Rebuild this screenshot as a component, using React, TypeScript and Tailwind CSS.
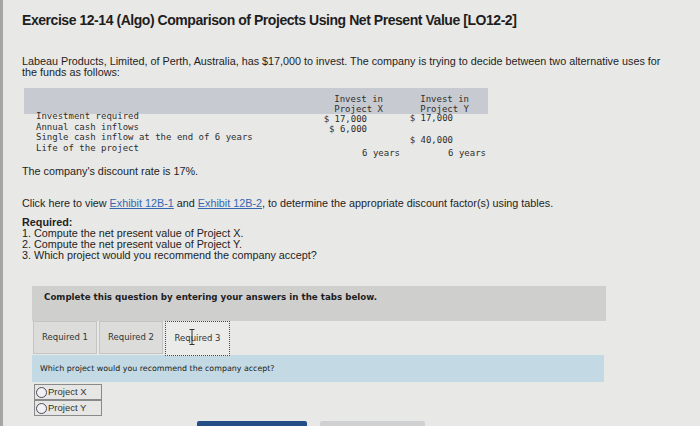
const sans = { fontFamily: '"Liberation Sans", Arial, sans-serif' };

function Tab({ label, active }: { label: string; active?: boolean }) {
  return (
    <div
      className={
        active
          ? "relative flex h-[35px] w-[65px] items-center justify-center border border-dotted border-[#4a4a4a] bg-[#ebebea] text-[8.5px] text-[#333]"
          : "flex h-[33px] w-[64px] items-center justify-center border border-[#c4c4c4] bg-[#dcdcdb] text-[8.5px] text-[#333]"
      }
    >
      {label}
      {active && (
        <svg className="absolute left-[23px] top-[7px]" width="6" height="16" viewBox="0 0 6 16" fill="none" stroke="#333" strokeWidth="1">
          <path d="M0.5 0.5h5M3 0.5v15M0.5 15.5h5" />
        </svg>
      )}
    </div>
  );
}

function Radio({ label }: { label: string }) {
  return (
    <div className="flex h-[16px] items-center gap-[1px] border border-[#8a8a8a] bg-[#e6e6e4] pl-[1px] text-[9.5px] text-[#333]" style={sans}>
      <span className="h-[11px] w-[11px] rounded-full border-[1.5px] border-[#4b4b63] bg-[#f1f1f1]" />
      {label}
    </div>
  );
}

export default function App() {
  return (
    <div className="flex h-[426px] w-[700px] overflow-hidden bg-[#e8e8e6] text-[#1e1e1e]" style={sans}>
      <div className="w-[3px] shrink-0 bg-[#a5a5a5]" />
      <div className="flex-1 pl-[19px]">
        <h1 className="pt-[11px] text-[14px] leading-[18px] font-bold tracking-[-0.45px]">
          Exercise 12-14 (Algo) Comparison of Projects Using Net Present Value [LO12-2]
        </h1>

        <p className="mt-[27px] text-[10.8px] leading-[11px]">
          Labeau Products, Limited, of Perth, Australia, has $17,000 to invest. The company is trying to decide between two alternative uses for
          <br />
          the funds as follows:
        </p>

        {/* Project table */}
        <div
          className="ml-[2px] mt-[10px] flex h-[71px] w-[464px] bg-[linear-gradient(to_bottom,#c8cad1_0,#c8cad1_26px,transparent_26px)] text-[9px] text-[#2e2e2e]"
          style={{ fontFamily: '"DejaVu Sans Mono", monospace' }}
        >
          <div className="w-[296px] whitespace-pre pl-[12px] pt-[23px] leading-[10.5px]">
            <div>Investment required</div>
            <div>Annual cash inflows</div>
            <div>Single cash inflow at the end of 6 years</div>
            <div>Life of the project</div>
          </div>
          <div className="w-[85px] whitespace-pre pt-[6px] text-right leading-[10px]">
            <div className="pr-[22px]">Invest in</div>
            <div className="pr-[22px]">Project X</div>
            <div className="pr-[38px]">$ 17,000</div>
            <div className="pr-[38px]">$ 6,000</div>
            <div className="mt-[14px] pr-[5px]">6 years</div>
          </div>
          <div className="w-[83px] whitespace-pre pt-[7px] text-right leading-[9.5px]">
            <div className="pr-[19px]">Invest in</div>
            <div className="pr-[19px]">Project Y</div>
            <div className="pr-[35px]">$ 17,000</div>
            <div className="mt-[12.5px] pr-[35px]">$ 40,000</div>
            <div className="mt-[3.5px] pr-[2px]">6 years</div>
          </div>
        </div>

        <p className="mt-[5.5px] text-[10.8px] leading-[13px]">The company's discount rate is 17%.</p>
        <p className="mt-[19px] text-[10.8px] leading-[13px]">
          Click here to view <span className="text-[#3766b0] underline">Exhibit 12B-1</span> and{" "}
          <span className="text-[#3766b0] underline">Exhibit 12B-2</span>, to determine the appropriate discount factor(s) using tables.
        </p>

        <div className="mt-[7px] text-[10.8px] leading-[11px]">
          <div className="font-bold">Required:</div>
          <div>1. Compute the net present value of Project X.</div>
          <div>2. Compute the net present value of Project Y.</div>
          <div>3. Which project would you recommend the company accept?</div>
        </div>

        {/* Answer section */}
        <div className="ml-[10px] mt-[25.5px] w-[574px]" style={{ fontFamily: '"DejaVu Sans", Verdana, sans-serif' }}>
          <div className="h-[35px] bg-[#cfcfce] pl-[12px] pt-[4px] text-[8.7px] leading-[14px] font-bold text-[#1e1e1e]">
            Complete this question by entering your answers in the tabs below.
          </div>

          <div className="ml-[1px] flex h-[33px] items-start gap-[2px]">
            <Tab label="Required 1" />
            <Tab label="Required 2" />
            <Tab label="Required 3" active />
          </div>

          <div className="mt-[1px] flex h-[27px] w-[572px] items-center bg-[#c3d9e3] pl-[8px] text-[7.9px] text-[#222]">
            Which project would you recommend the company accept?
          </div>

          <div className="ml-[2px] mt-[2px] w-[68px]">
            <Radio label="Project X" />
            <Radio label="Project Y" />
          </div>

          <div className="mt-[5px] flex gap-[13px] pl-[165px]">
            <div className="h-[30px] w-[110px] rounded-[2px] bg-[#234f86]" />
            <div className="h-[30px] w-[105px] rounded-[2px] bg-[#cfd0d2]" />
          </div>
        </div>
      </div>
    </div>
  );
}
